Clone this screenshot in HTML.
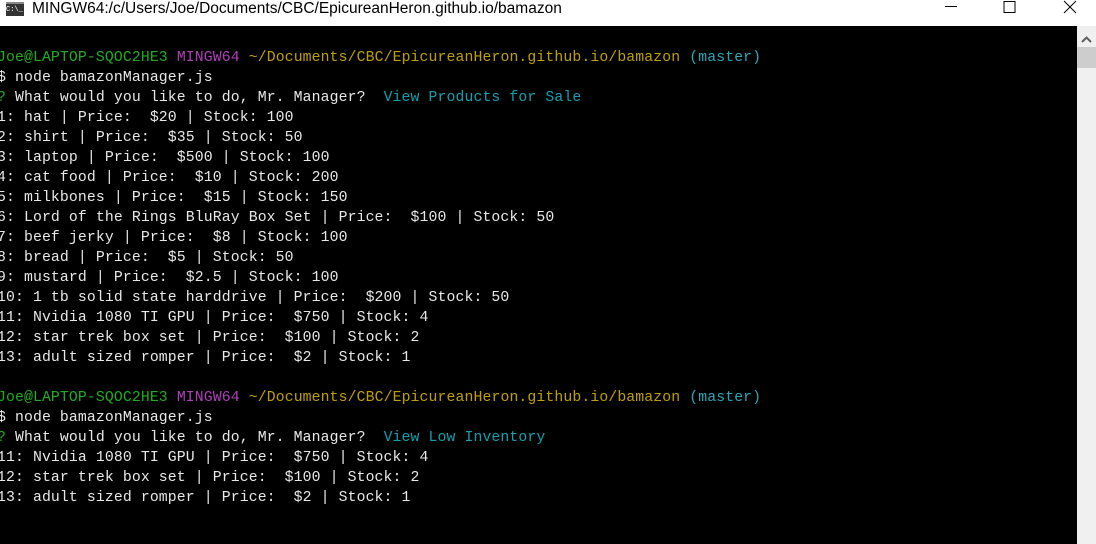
<!DOCTYPE html>
<html><head><style>
body{margin:0;width:1096px;height:544px;overflow:hidden;background:#000;position:relative;font-family:"Liberation Sans",sans-serif}
#tb{position:absolute;left:0;top:0;width:1096px;height:26px;background:#fff}
#tb .t{position:absolute;left:32px;top:0px;font-size:15.5px;line-height:18px;color:#000}
#ic{position:absolute;left:6px;top:2px;width:18px;height:12px;background:#333;border-top:2px solid #888;color:#fff;font-size:7px;line-height:12px;font-family:"Liberation Mono",monospace}
#sb{position:absolute;left:1077px;top:26px;width:19px;height:518px;background:#f0f0f0}
#th{position:absolute;left:0;top:21px;width:19px;height:21px;background:#cdcdcd}
pre{position:absolute;left:-3px;top:48px;margin:0;font-family:"Liberation Mono",monospace;font-size:14.8px;letter-spacing:0.11px;line-height:20px;color:#e8e8e8}
.g{color:#1fae1f}.m{color:#b13fbc}.y{color:#c0a000}.c{color:#2aa8b8}.a{color:#11a0b0}
</style></head><body>
<div id="tb"><div id="ic">C:\_</div><div class="t">MINGW64:/c/Users/Joe/Documents/CBC/EpicureanHeron.github.io/bamazon</div>
<svg style="position:absolute;left:940px;top:0" width="150" height="20"><path d="M5 6.5H17" stroke="#000" fill="none"/><rect x="64" y="1.5" width="11" height="11" stroke="#000" fill="none"/><path d="M124 1L136 13M136 1L124 13" stroke="#000"/></svg></div>
<div id="sb"><svg width="19" height="20" style="position:absolute;top:4px"><path d="M5 12L9.5 7.5L14 12" stroke="#606060" stroke-width="2" fill="none"/></svg><div id="th"></div></div>
<pre><span class="g">Joe@LAPTOP-SQOC2HE3</span> <span class="m">MINGW64</span> <span class="y">~/Documents/CBC/EpicureanHeron.github.io/bamazon</span> <span class="c">(master)</span>
$ node bamazonManager.js
<span class="g">?</span> What would you like to do, Mr. Manager?  <span class="a">View Products for Sale</span>
1: hat | Price:  $20 | Stock: 100
2: shirt | Price:  $35 | Stock: 50
3: laptop | Price:  $500 | Stock: 100
4: cat food | Price:  $10 | Stock: 200
5: milkbones | Price:  $15 | Stock: 150
6: Lord of the Rings BluRay Box Set | Price:  $100 | Stock: 50
7: beef jerky | Price:  $8 | Stock: 100
8: bread | Price:  $5 | Stock: 50
9: mustard | Price:  $2.5 | Stock: 100
10: 1 tb solid state harddrive | Price:  $200 | Stock: 50
11: Nvidia 1080 TI GPU | Price:  $750 | Stock: 4
12: star trek box set | Price:  $100 | Stock: 2
13: adult sized romper | Price:  $2 | Stock: 1

<span class="g">Joe@LAPTOP-SQOC2HE3</span> <span class="m">MINGW64</span> <span class="y">~/Documents/CBC/EpicureanHeron.github.io/bamazon</span> <span class="c">(master)</span>
$ node bamazonManager.js
<span class="g">?</span> What would you like to do, Mr. Manager?  <span class="a">View Low Inventory</span>
11: Nvidia 1080 TI GPU | Price:  $750 | Stock: 4
12: star trek box set | Price:  $100 | Stock: 2
13: adult sized romper | Price:  $2 | Stock: 1</pre>
</body></html>
